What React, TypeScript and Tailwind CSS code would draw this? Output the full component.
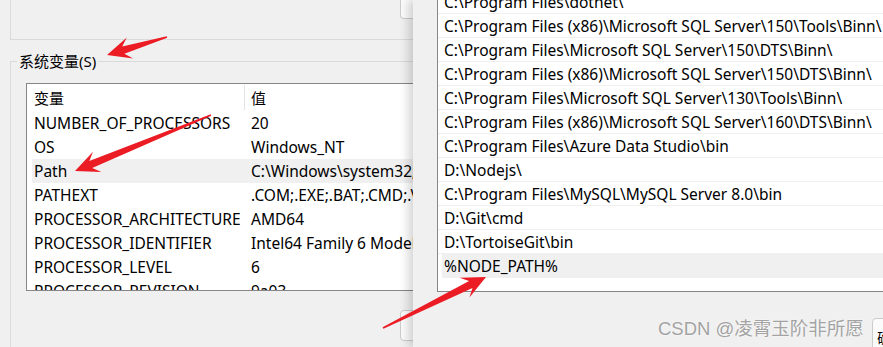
import React from "react";

type Pt = [number, number];

function arrowPoints(t: Pt, p: Pt): string {
  const dx = p[0] - t[0];
  const dy = p[1] - t[1];
  const L = Math.hypot(dx, dy);
  const ux = dx / L;
  const uy = dy / L;
  const nx = -uy;
  const ny = ux;
  const headLen = 24;
  const notch = 17;
  const headHalf = 11;
  const shaftHalf = 3.8;
  const tailHalf = 0.8;
  const at = (d: number, w: number): Pt => [p[0] - ux * d + nx * w, p[1] - uy * d + ny * w];
  const pts: Pt[] = [
    [t[0] + nx * tailHalf, t[1] + ny * tailHalf],
    at(notch, shaftHalf),
    at(headLen, headHalf),
    p,
    at(headLen, -headHalf),
    at(notch, -shaftHalf),
    [t[0] - nx * tailHalf, t[1] - ny * tailHalf],
  ];
  return pts.map((q) => `${q[0].toFixed(1)},${q[1].toFixed(1)}`).join(" ");
}

const sysVars: [string, string][] = [
  ["NUMBER_OF_PROCESSORS", "20"],
  ["OS", "Windows_NT"],
  ["Path", "C:\\Windows\\system32;C:\\Windows;"],
  ["PATHEXT", ".COM;.EXE;.BAT;.CMD;.VBS;.VBE;"],
  ["PROCESSOR_ARCHITECTURE", "AMD64"],
  ["PROCESSOR_IDENTIFIER", "Intel64 Family 6 Model 154"],
  ["PROCESSOR_LEVEL", "6"],
  ["PROCESSOR_REVISION", "9a03"],
];

const paths = [
  "C:\\Program Files\\dotnet\\",
  "C:\\Program Files (x86)\\Microsoft SQL Server\\150\\Tools\\Binn\\",
  "C:\\Program Files\\Microsoft SQL Server\\150\\DTS\\Binn\\",
  "C:\\Program Files (x86)\\Microsoft SQL Server\\150\\DTS\\Binn\\",
  "C:\\Program Files\\Microsoft SQL Server\\130\\Tools\\Binn\\",
  "C:\\Program Files (x86)\\Microsoft SQL Server\\160\\DTS\\Binn\\",
  "C:\\Program Files\\Azure Data Studio\\bin",
  "D:\\Nodejs\\",
  "C:\\Program Files\\MySQL\\MySQL Server 8.0\\bin",
  "D:\\Git\\cmd",
  "D:\\TortoiseGit\\bin",
];

export default function App() {
  return (
    <div className="relative w-[883px] h-[347px] overflow-hidden bg-[#f0f0f0] flex text-[15.5px] leading-[20px] text-black font-['Noto_Sans','Noto_Sans_CJK_SC',sans-serif]">
      {/* Left (background) dialog */}
      <div className="w-[413px] shrink-0 overflow-hidden flex flex-col">
        <div className="ml-[10px] w-[430px] h-[40px] shrink-0 border-l border-b border-[#dadada] pl-[389px]">
          <div className="w-[30px] h-[19px] border border-t-0 border-[#cccccc] rounded-b-[4px] bg-[#fbfbfb]" />
        </div>
        <fieldset className="mt-[11px] ml-[10px] w-[430px] flex-1 border-l border-t border-[#dadada] pl-[6px] min-w-0">
          <legend className="px-[2px] leading-[20px] text-[15px]">系统变量(S)</legend>
          <div className="mt-[12px] ml-[9px] w-[420px] h-[208px] border border-[#868686] bg-white overflow-hidden">
            <div className="flex h-[27px] text-[15px]">
              <div className="w-[218px] pl-[7px] border-r border-[#e3e3e3] my-px flex items-center">变量</div>
              <div className="pl-[6px] flex items-center">值</div>
            </div>
            {sysVars.map(([k, v]) => (
              <div
                key={k}
                className={`ml-[5px] flex h-[24px] items-center whitespace-nowrap ${k === "Path" ? "bg-[#f0f0f0]" : ""}`}
              >
                <div className="w-[212px] pl-[2px] shrink-0">{k}</div>
                <div className="pl-[7px]">{v}</div>
              </div>
            ))}
          </div>
          <div className="mt-[19px] ml-[383px] w-[40px] h-[31px] rounded-[4px] border border-[#cccccc] bg-[#fbfbfb]" />
        </fieldset>
      </div>

      {/* Right (foreground) dialog */}
      <div className="flex-1 overflow-hidden bg-[#f0f0f0] pl-[24px] flex flex-col shadow-[-5px_0_9px_rgba(0,0,0,0.16)] z-10">
        <div className="-mt-[12px] w-[470px] border border-[#868686] bg-white pb-[13px] shrink-0">
          {paths.map((p, i) => (
            <div
              key={i}
              className={`h-[24px] flex items-center pl-[6px] whitespace-nowrap border-b border-[#f0f0f0] ${i === 0 ? "mt-px" : ""}`}
            >
              {p}
            </div>
          ))}
          <div className="ml-[4px] h-[24px] flex items-center pl-[2px] bg-[#f0f0f0] whitespace-nowrap">%NODE_PATH%</div>
        </div>
        <div className="mt-[26px] ml-[435px] w-[40px] h-[40px] shrink-0 border border-[#cccccc] rounded-tl-[4px] bg-[#fbfbfb] pl-[4px] pt-[10px] text-[14px] leading-[18px]">
          确定
        </div>
      </div>

      {/* Watermark */}
      <div className="absolute left-[658px] top-[317px] text-[18.5px] leading-[24px] text-[#a3a3a3] whitespace-nowrap font-['Liberation_Sans','Noto_Sans_CJK_SC',sans-serif] [text-shadow:0_0_2px_#ffffff] z-20">
        CSDN @凌霄玉阶非所愿
      </div>

      {/* Red arrows */}
      <svg className="absolute left-0 top-0 z-30 pointer-events-none" width={883} height={347} viewBox="0 0 883 347">
        <polygon points={arrowPoints([167, 37], [107, 55])} fill="#ec1c24" />
        <polygon points={arrowPoints([211, 115], [75, 171])} fill="#ec1c24" />
        <polygon points={arrowPoints([383, 328], [486, 277])} fill="#ec1c24" />
      </svg>
    </div>
  );
}
